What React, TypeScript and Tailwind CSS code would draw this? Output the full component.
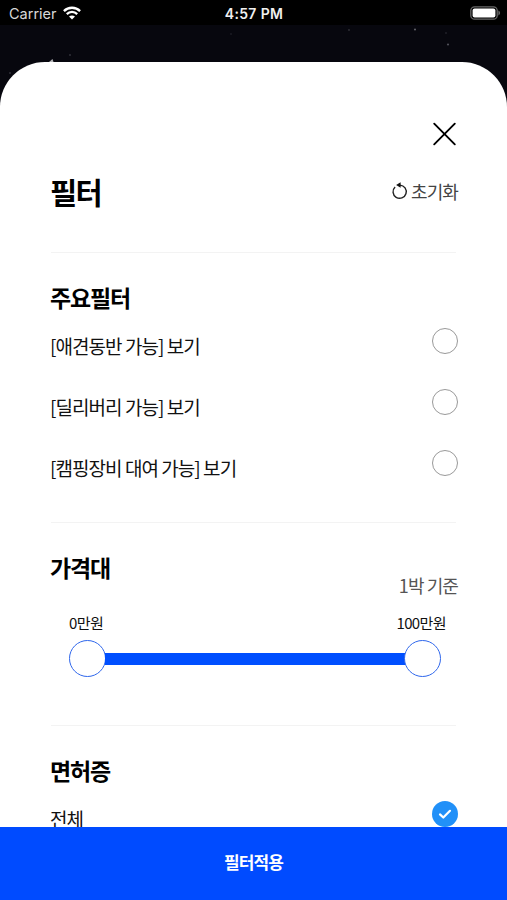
import React from 'react';

const options = ['[애견동반 가능] 보기', '[딜리버리 가능] 보기', '[캠핑장비 대여 가능] 보기'];

function StatusBar() {
  return (
    <div className="flex h-[25px] shrink-0 items-center justify-between bg-black pl-[9px] pr-[6px] pt-[2px] font-['Inter','Liberation_Sans',sans-serif] text-white">
      <div className="flex flex-1 items-center gap-[6px]">
        <span className="text-[14.5px] leading-5 text-[#d8d8d8]">Carrier</span>
        <svg className="-mt-0.5" width="18" height="14" viewBox="0 0 18 14" fill="none" stroke="white" strokeWidth="2.3">
          <path d="M0.9 5.1C5.4 0.6 12.6 0.6 17.1 5.1" />
          <path d="M3.8 8.1C6.7 5.2 11.3 5.2 14.2 8.1" />
          <path d="M9 13.6L6 10.6C7.7 9 10.3 9 12 10.6Z" fill="white" stroke="none" />
        </svg>
      </div>
      <span className="mr-[2px] text-[14px] font-semibold leading-5 tracking-[0.35px] text-[#f0f0f0]">4:57 PM</span>
      <div className="flex flex-1 justify-end">
        <svg className="-mt-0.5" width="31" height="14" viewBox="0 0 31 14">
          <rect x="0.8" y="0.8" width="26.4" height="12.4" rx="3.8" fill="none" stroke="#686868" strokeWidth="1.3" />
          <rect x="2.6" y="2.4" width="22.8" height="9.2" rx="2" fill="white" />
          <path d="M28.4 4.6C30.6 5.4 30.6 8.6 28.4 9.4Z" fill="#686868" />
        </svg>
      </div>
    </div>
  );
}

function Backdrop() {
  return (
    <svg className="absolute left-0 top-[25px]" width="507" height="90" viewBox="0 25 507 90">
      <rect y="25" width="507" height="90" fill="#07070e" />
      <circle cx="415" cy="29.5" r="1" fill="#66666c" />
      <circle cx="448" cy="44.5" r="1.1" fill="#505058" />
      <circle cx="446" cy="33" r="0.8" fill="#34343c" />
      <circle cx="349" cy="30" r="0.9" fill="#303038" />
      <circle cx="231" cy="34" r="0.8" fill="#2b2b33" />
      <circle cx="70" cy="55" r="1" fill="#303038" />
      <circle cx="10" cy="73" r="1" fill="#303038" />
      <path d="M49 62L52.5 59L53.5 62Z" fill="#b5b5b8" />
    </svg>
  );
}

const Heading = ({ children }: { children: React.ReactNode }) => (
  <h2 className="text-[23px] font-bold leading-[34px] tracking-[-0.05em] text-black">{children}</h2>
);

const Divider = () => <hr className="ml-px mr-[2px] shrink-0 border-[#f3f3f3]" />;

export default function App() {
  return (
    <div className="relative flex h-[900px] w-[507px] flex-col overflow-hidden bg-[#07070e] font-['Noto_Sans_CJK_KR',sans-serif]">
      <Backdrop />
      <StatusBar />
      <main className="relative mt-[37px] flex min-h-0 flex-1 flex-col overflow-hidden rounded-t-[45px] bg-white pl-[50px] pr-[49px]">
        <div className="flex h-[106px] shrink-0 justify-end pt-[60px]">
          <button aria-label="닫기" className="h-6 w-[26px]">
            <svg width="26" height="24" viewBox="0 0 26 24" fill="none" stroke="black" strokeWidth="1.9" strokeLinecap="round">
              <path d="M2.2 1.7L22.8 22.3M22.8 1.7L2.2 22.3" />
            </svg>
          </button>
        </div>
        <div className="flex h-[84px] shrink-0 items-start justify-between">
          <h1 className="text-[29.5px] font-bold leading-[46px] tracking-[-0.055em] text-black">필터</h1>
          <button className="flex items-center gap-[3px] pt-[10px] text-[18px] leading-[26px] tracking-[-0.05em] text-[#444]">
            <svg width="16" height="18" viewBox="0 0 16 18" fill="none">
              <path d="M3.1 4.9A6.6 6.6 0 1 0 8 3.1" stroke="#222" strokeWidth="1.4" />
              <path d="M4.1 3L8.6 0.3V5.8Z" fill="#111" />
            </svg>
            초기화
          </button>
        </div>
        <Divider />
        <section className="h-[269px] shrink-0 pt-[27px]">
          <Heading>주요필터</Heading>
          <ul>
            {options.map((option) => (
              <li key={option} className="flex h-[61px] items-start justify-between pt-[14px]">
                <span className="pt-[4px] text-[19px] leading-7 tracking-[-0.05em] text-[#111]">{option}</span>
                <span className="h-[26px] w-[26px] rounded-full border-[1.5px] border-[#999]" />
              </li>
            ))}
          </ul>
        </section>
        <Divider />
        <section className="h-[202px] shrink-0 pt-[27px]">
          <Heading>가격대</Heading>
          <p className="mt-[-12px] text-right text-[18px] leading-[26px] tracking-[-0.05em] text-[#555]">1박 기준</p>
          <div className="mt-[14px] flex justify-between pl-[19px] pr-[12px] text-[15px] leading-[22px] tracking-[-0.04em] text-[#111]">
            <span>0만원</span>
            <span>100만원</span>
          </div>
          <div className="mt-[6px] flex items-center pl-[19px] pr-[17px]">
            <span className="h-[37px] w-[37px] rounded-full border-[1.5px] border-[#2f67ec] bg-white" />
            <span className="-mx-px h-3 flex-1 bg-[#004fff]" />
            <span className="h-[37px] w-[37px] rounded-full border-[1.5px] border-[#2f67ec] bg-white" />
          </div>
        </section>
        <Divider />
        <section className="pt-[27px]">
          <Heading>면허증</Heading>
          <div className="flex items-start justify-between pt-[14px]">
            <span className="pt-[4px] text-[19px] leading-7 tracking-[-0.05em] text-[#111]">전체</span>
            <svg width="26" height="26" viewBox="0 0 26 26" fill="none">
              <circle cx="13" cy="13" r="13" fill="#2190f8" />
              <path d="M8 13.4L11.3 16.5L18 9.8" stroke="white" strokeWidth="2.2" strokeLinecap="round" strokeLinejoin="round" />
            </svg>
          </div>
        </section>
      </main>
      <button className="relative h-[73px] shrink-0 bg-[#004bff] pb-[3px] text-[17px] font-bold tracking-[-0.05em] text-white">필터적용</button>
    </div>
  );
}
